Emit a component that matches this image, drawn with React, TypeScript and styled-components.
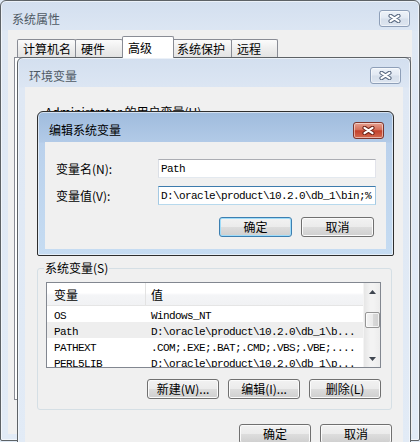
import React from "react";
import styled, { createGlobalStyle } from "styled-components";

const GlobalStyle = createGlobalStyle`
  html, body { margin: 0; padding: 0; background: #ffffff; }
  body {
    font-family: "Noto Sans CJK SC", "Noto Sans", sans-serif;
    font-size: 12px;
    color: #000;
  }
  * { box-sizing: border-box; }
`;

const Desktop = styled.div`
  position: relative;
  width: 420px;
  height: 442px;
  overflow: hidden;
  background: #dfe9f5;
`;

const Window = styled.div<{ $active?: boolean }>`
  position: absolute;
  display: flex;
  flex-direction: column;
  border: 1px solid ${(p) => (p.$active ? "#2e2e2e" : "#5d6266")};
  border-radius: 6px 6px 2px 2px;
  padding: 0 7px 6px;
  box-shadow: inset 0 0 0 1px rgba(255, 255, 255, 0.55);
  background: ${(p) =>
    p.$active
      ? "linear-gradient(#9fbbdd 0px, #b2cae7 30px, #bad1ec 31px, #c6dcf2 100%)"
      : "linear-gradient(#d3dfef 0px, #dce6f3 29px, #dfe8f4 30px, #e2ebf6 100%)"};
`;

const OuterWindow = styled(Window)`
  left: 0;
  top: 0;
  width: 420px;
  height: 441px;
`;

const EnvWindow = styled(Window)`
  left: 17px;
  top: 57px;
  width: 394px;
  height: 410px;
`;

const EditDialog = styled(Window)`
  left: 37px;
  top: 111px;
  width: 357px;
  height: 145px;
`;

const TitleBar = styled.div<{ $active?: boolean; $h?: number }>`
  height: ${(p) => p.$h ?? 29}px;
  flex: none;
  display: flex;
  align-items: center;
  padding: 6px 0 0 4px;
  color: ${(p) => (p.$active ? "#000000" : "#4e5964")};
  font-size: 12px;
  line-height: 16px;
`;

const TitleText = styled.span`
  white-space: nowrap;
`;

const CloseButton = styled.div<{ $active?: boolean }>`
  margin-left: auto;
  margin-right: 2px;
  width: 31px;
  height: 17px;
  display: flex;
  align-items: center;
  justify-content: center;
  border: 1px solid ${(p) => (p.$active ? "#7d352c" : "#8e9fb8")};
  border-radius: 3px;
  background: ${(p) =>
    p.$active
      ? "linear-gradient(#e6a090 0%, #d46f5a 45%, #c2412b 52%, #d46a50 100%)"
      : "linear-gradient(#eef3f9 0%, #e2e9f3 48%, #d6dfeb 52%, #dde5f0 100%)"};
  box-shadow: inset 0 0 0 1px rgba(255, 255, 255, 0.5);
`;

const CloseGlyph = ({ active }: { active?: boolean }) => (
  <svg width="13" height="9" viewBox="0 0 13 9">
    <path
      d="M2.5 1.8L10.5 7.2M10.5 1.8L2.5 7.2"
      stroke={active ? "#6e2419" : "#5a6a82"}
      strokeWidth="4.2"
      strokeLinecap="round"
    />
    <path
      d="M2.5 1.8L10.5 7.2M10.5 1.8L2.5 7.2"
      stroke="#ffffff"
      strokeWidth="2.2"
      strokeLinecap="round"
    />
  </svg>
);

const Client = styled.div`
  flex: 1;
  background: #f0f0f0;
  display: flex;
  flex-direction: column;
  min-height: 0;
`;

/* ---------- outer window: tabs ---------- */

const TabArea = styled.div`
  margin-left: 6px;
  margin-right: 1px;
  display: flex;
  flex-direction: column;
`;

const TabStrip = styled.div`
  margin-top: 6px;
  padding-left: 3px;
  display: flex;
  align-items: flex-end;
  height: 21px;
`;

const Tab = styled.div<{ $w: number; $selected?: boolean }>`
  position: relative;
  width: ${(p) => p.$w}px;
  height: ${(p) => (p.$selected ? 22 : 18)}px;
  margin-left: -1px;
  margin-right: ${(p) => (p.$selected ? -2 : 0)}px;
  margin-bottom: ${(p) => (p.$selected ? -1 : 0)}px;
  z-index: ${(p) => (p.$selected ? 2 : 1)};
  padding-left: 5px;
  display: flex;
  align-items: center;
  border: 1px solid #898c95;
  border-bottom: none;
  border-radius: 2px 2px 0 0;
  background: ${(p) =>
    p.$selected ? "#ffffff" : "linear-gradient(#fbfbfb 0%, #eeeeee 50%, #e3e3e3 100%)"};
  line-height: 16px;
  white-space: nowrap;
  &:first-child {
    margin-left: 0;
  }
`;

const TabPanel = styled.div`
  height: 343px;
  border: 1px solid #898c95;
  background: #ffffff;
`;

/* ---------- environment variables window ---------- */

const EnvClient = styled(Client)`
  padding: 18px 11px 0 12px;
`;

const UserLabel = styled.div`
  margin-left: 8px;
  height: 14px;
  line-height: 14px;
  white-space: nowrap;
`;

const UserArea = styled.div`
  height: 142px;
`;

const GroupBox = styled.div`
  position: relative;
  margin-top: 7px;
  border: 1px solid #d5dfe5;
  border-radius: 3px;
  padding: 13px 10px 10px 8px;
  display: flex;
  flex-direction: column;
`;

const GroupLegend = styled.span`
  position: absolute;
  top: -8px;
  left: 6px;
  padding: 0 1px;
  line-height: 14px;
  background: #f0f0f0;
  white-space: nowrap;
`;

const ListBox = styled.div`
  height: 86px;
  border: 1px solid #828790;
  background: #ffffff;
  display: flex;
  overflow: hidden;
`;

const ListBody = styled.div`
  flex: 1;
  display: flex;
  flex-direction: column;
  min-width: 0;
  overflow: hidden;
`;

const HeaderRow = styled.div`
  flex: none;
  height: 23px;
  display: grid;
  grid-template-columns: 99px 1fr;
  background: linear-gradient(#ffffff 0%, #ffffff 45%, #f4f5f7 55%, #f1f2f4 100%);
  border-bottom: 1px solid #e5e5e5;
`;

const HeaderCell = styled.div<{ $pad: number }>`
  display: flex;
  align-items: center;
  padding-left: ${(p) => p.$pad}px;
  font-size: 12px;
  &:first-child {
    border-right: 1px solid #e3e3e3;
  }
`;

const Row = styled.div<{ $hover?: boolean }>`
  flex: none;
  height: 16px;
  display: grid;
  grid-template-columns: 99px 1fr;
  background: ${(p) => (p.$hover ? "#eeeeee" : "transparent")};
`;

const Mono = styled.span`
  font-family: "Liberation Mono", "DejaVu Sans Mono", monospace;
  font-size: 11px;
  letter-spacing: -0.6px;
  white-space: nowrap;
`;

const Cell = styled.div<{ $pad: number }>`
  padding-left: ${(p) => p.$pad}px;
  line-height: 16px;
  overflow: hidden;
  white-space: nowrap;
`;

const ScrollBar = styled.div`
  flex: none;
  width: 17px;
  display: flex;
  flex-direction: column;
  background: linear-gradient(to right, #e6e6e6, #f3f3f3 40%, #f3f3f3 60%, #ececec);
  border-left: 1px solid #f4f4f4;
`;

const ScrollArrow = styled.div`
  height: 17px;
  flex: none;
  display: flex;
  align-items: center;
  justify-content: center;
`;

const ScrollTrack = styled.div`
  flex: 1;
  display: flex;
  flex-direction: column;
  align-items: center;
`;

const ScrollThumb = styled.div`
  margin-top: 12px;
  width: 15px;
  height: 16px;
  border: 1px solid #959595;
  border-radius: 2px;
  background: linear-gradient(to right, #f3f3f3 0%, #ebebeb 50%, #d9d9d9 51%, #d0d0d0 100%);
  box-shadow: inset 0 0 0 1px rgba(255, 255, 255, 0.7);
`;

const Arrow = ({ down }: { down?: boolean }) => (
  <svg width="7" height="4" viewBox="0 0 7 4">
    <path d={down ? "M0 0H7L3.5 4Z" : "M0 4H7L3.5 0Z"} fill="#3f4650" />
  </svg>
);

const ButtonRow = styled.div<{ $top: number }>`
  margin-top: ${(p) => p.$top}px;
  display: flex;
  justify-content: flex-end;
  gap: 9px;
`;

const Button = styled.div<{ $default?: boolean; $w?: number }>`
  width: ${(p) => p.$w ?? 72}px;
  height: 20px;
  flex: none;
  display: flex;
  align-items: center;
  justify-content: center;
  border: 1px solid ${(p) => (p.$default ? "#3c7fb1" : "#707070")};
  border-radius: 3px;
  background: linear-gradient(#f2f2f2 0%, #ebebeb 50%, #dddddd 51%, #cfcfcf 100%);
  box-shadow: inset 0 0 0 1px ${(p) => (p.$default ? "#9fdcf9" : "#fbfbfb")};
  line-height: 16px;
  white-space: nowrap;
`;

/* ---------- edit dialog ---------- */

const EditClient = styled(Client)`
  padding: 17px 12px 11px 11px;
`;

const FieldGrid = styled.div`
  display: grid;
  grid-template-columns: 102px 218px;
  row-gap: 8px;
  align-items: center;
`;

const FieldLabel = styled.div`
  line-height: 16px;
  white-space: nowrap;
`;

const TextBox = styled.div<{ $focused?: boolean }>`
  height: 19px;
  padding-left: 2px;
  display: flex;
  align-items: center;
  overflow: hidden;
  background: #ffffff;
  border: 1px solid;
  border-color: ${(p) =>
    p.$focused ? "#3d7bad #a4c9e3 #b7d9ed #a4c9e3" : "#abadb3 #e2e3ea #e3e9ef #dbdfe6"};
`;

const rows = [
  { name: "OS", value: "Windows_NT" },
  { name: "Path", value: "D:\\oracle\\product\\10.2.0\\db_1\\b...", hover: true },
  { name: "PATHEXT", value: ".COM;.EXE;.BAT;.CMD;.VBS;.VBE;...." },
  { name: "PERL5LIB", value: "D:\\oracle\\product\\10.2.0\\db_1\\p..." },
];

const tabs = [
  { label: "计算机名", w: 59 },
  { label: "硬件", w: 48 },
  { label: "高级", w: 52, selected: true },
  { label: "系统保护", w: 61 },
  { label: "远程", w: 47 },
];

export default function App() {
  return (
    <>
      <GlobalStyle />
      <Desktop>
        <OuterWindow>
          <TitleBar>
            <TitleText>系统属性</TitleText>
            <CloseButton>
              <CloseGlyph />
            </CloseButton>
          </TitleBar>
          <Client>
            <TabArea>
              <TabStrip>
                {tabs.map((t) => (
                  <Tab key={t.label} $w={t.w} $selected={t.selected}>
                    {t.label}
                  </Tab>
                ))}
              </TabStrip>
              <TabPanel />
            </TabArea>
          </Client>
        </OuterWindow>

        <EnvWindow>
          <TitleBar>
            <TitleText>环境变量</TitleText>
            <CloseButton>
              <CloseGlyph />
            </CloseButton>
          </TitleBar>
          <EnvClient>
            <UserLabel>Administrator 的用户变量(U)</UserLabel>
            <UserArea />
            <GroupBox>
              <GroupLegend>系统变量(S)</GroupLegend>
              <ListBox>
                <ListBody>
                  <HeaderRow>
                    <HeaderCell $pad={7}>变量</HeaderCell>
                    <HeaderCell $pad={5}>值</HeaderCell>
                  </HeaderRow>
                  {rows.map((r) => (
                    <Row key={r.name} $hover={r.hover}>
                      <Cell $pad={7}>
                        <Mono>{r.name}</Mono>
                      </Cell>
                      <Cell $pad={5}>
                        <Mono>{r.value}</Mono>
                      </Cell>
                    </Row>
                  ))}
                </ListBody>
                <ScrollBar>
                  <ScrollArrow>
                    <Arrow />
                  </ScrollArrow>
                  <ScrollTrack>
                    <ScrollThumb />
                  </ScrollTrack>
                  <ScrollArrow>
                    <Arrow down />
                  </ScrollArrow>
                </ScrollBar>
              </ListBox>
              <ButtonRow $top={11}>
                <Button>新建(W)...</Button>
                <Button>编辑(I)...</Button>
                <Button>删除(L)</Button>
              </ButtonRow>
            </GroupBox>
            <ButtonRow $top={14}>
              <Button>确定</Button>
              <Button>取消</Button>
            </ButtonRow>
          </EnvClient>
        </EnvWindow>

        <EditDialog $active>
          <TitleBar $active $h={30}>
            <TitleText>编辑系统变量</TitleText>
            <CloseButton $active>
              <CloseGlyph active />
            </CloseButton>
          </TitleBar>
          <EditClient>
            <FieldGrid>
              <FieldLabel>变量名(N):</FieldLabel>
              <TextBox>
                <Mono>Path</Mono>
              </TextBox>
              <FieldLabel>变量值(V):</FieldLabel>
              <TextBox $focused>
                <Mono>D:\oracle\product\10.2.0\db_1\bin;%</Mono>
              </TextBox>
            </FieldGrid>
            <ButtonRow $top={12}>
              <Button $default $w={73}>确定</Button>
              <Button $w={73}>取消</Button>
            </ButtonRow>
          </EditClient>
        </EditDialog>
      </Desktop>
    </>
  );
}
